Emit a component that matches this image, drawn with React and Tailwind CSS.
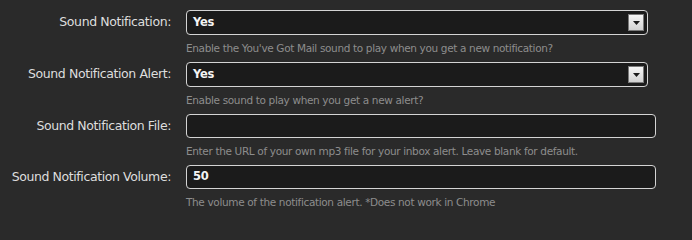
const ROWS = [
  {
    label: "Sound Notification:",
    type: "select",
    value: "Yes",
    help: "Enable the You've Got Mail sound to play when you get a new notification?",
  },
  {
    label: "Sound Notification Alert:",
    type: "select",
    value: "Yes",
    help: "Enable sound to play when you get a new alert?",
  },
  {
    label: "Sound Notification File:",
    type: "text",
    value: "",
    help: "Enter the URL of your own mp3 file for your inbox alert. Leave blank for default.",
  },
  {
    label: "Sound Notification Volume:",
    type: "text",
    value: "50",
    help: "The volume of the notification alert. *Does not work in Chrome",
  },
];

function Field({ row }) {
  if (row.type === "select") {
    return (
      <div className="flex h-[25px] w-[462px] items-center rounded-[4px] border border-[#d4d4d4] bg-[#1b1b1b] pl-[6px] pr-[3px]">
        <span className="flex-1 text-[11.5px] font-bold tracking-[-0.3px] text-[#f4f4f4]">{row.value}</span>
        <span className="flex h-[17px] w-[16px] items-center justify-center border border-[#7a7a7a] bg-gradient-to-b from-[#f6f6f6] to-[#d2d2d2]">
          <svg width="7" height="4" viewBox="0 0 7 4">
            <path d="M0 0h7L3.5 4z" fill="#1a1a1a" />
          </svg>
        </span>
      </div>
    );
  }
  return (
    <div className="flex h-[24px] w-[470px] items-center rounded-[4px] border border-[#d4d4d4] bg-[#1b1b1b] pl-[6px]">
      <span className="text-[11.5px] font-bold tracking-[-0.3px] text-[#f4f4f4]">{row.value}</span>
    </div>
  );
}

export default function App() {
  return (
    <div className="min-h-screen w-full bg-[#2a2a2a] pt-[10px] font-['DejaVu_Sans',sans-serif]">
      <div className="flex flex-col gap-[4px]">
        {ROWS.map((row) => (
          <div key={row.label} className="flex items-start">
            <div className="flex h-[25px] w-[171px] items-center justify-end text-[12.5px] tracking-[-0.4px] text-[#dedede]">
              {row.label}
            </div>
            <div className="ml-[15px] flex flex-col">
              <Field row={row} />
              <div className="mt-[4px] h-[19px] text-[10.5px] leading-[19px] tracking-[-0.35px] text-[#8d8d8d]">
                {row.help}
              </div>
            </div>
          </div>
        ))}
      </div>
    </div>
  );
}
